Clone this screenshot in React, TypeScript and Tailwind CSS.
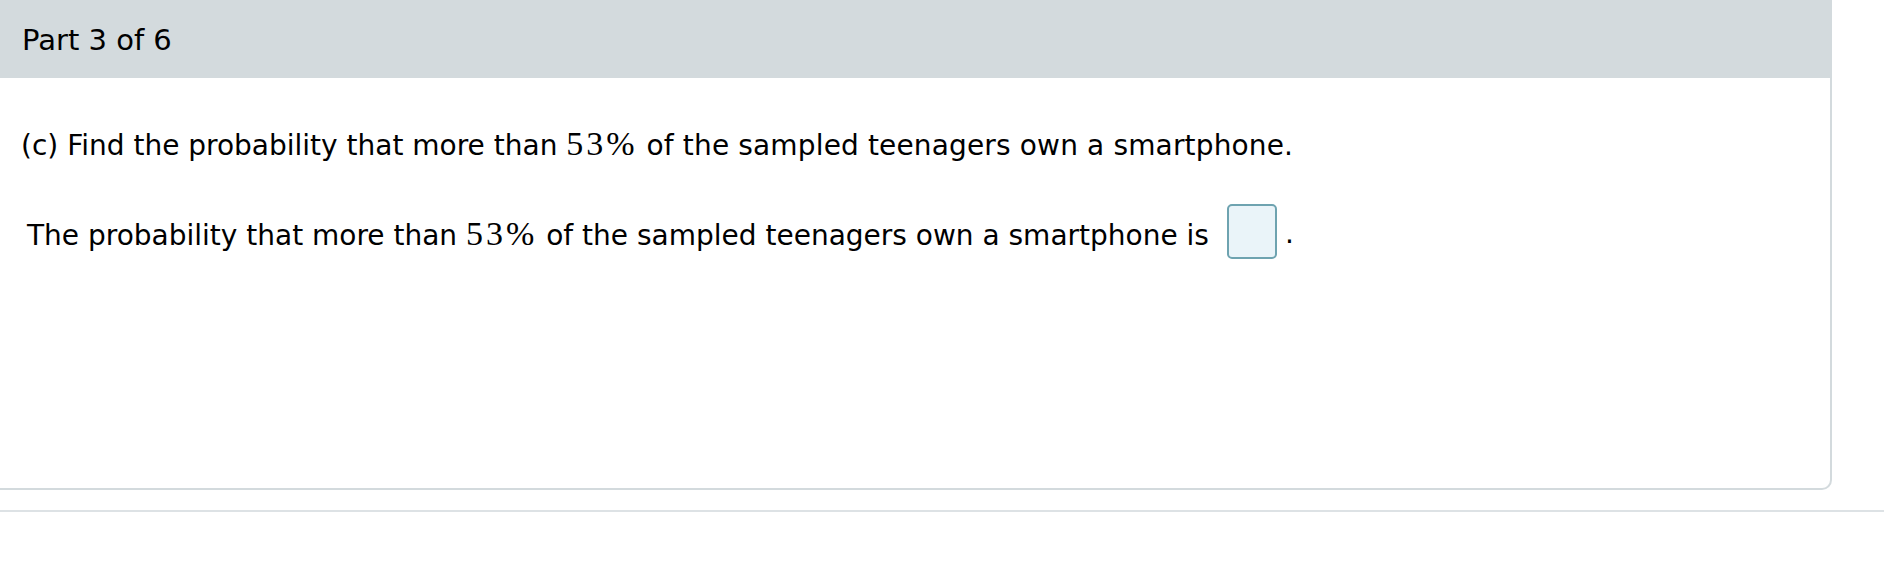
import React from "react";

export default function App() {
  const sans = { fontFamily: '"DejaVu Sans", Verdana, sans-serif' };
  const serif = { fontFamily: '"Liberation Serif", "Times New Roman", serif' };
  return (
    <div className="w-[1884px] h-[564px] bg-white text-black" style={sans}>
      <div className="w-[1832px] h-[490px] border-r-2 border-b-2 border-[#d3dadd] rounded-br-[10px] flex flex-col">
        <div className="h-[78px] bg-[#d3dadd] flex items-center pl-[22px] pt-[2px] text-[29px] leading-none">
          Part 3 of 6
        </div>
        <div className="pt-[49px] pl-[21px] text-[28px]">
          <div className="leading-[34px] whitespace-nowrap">
            (c) Find the probability that more than{" "}
            <span className="text-[34px] tracking-[3px]" style={serif}>
              53%
            </span>{" "}
            <span className="tracking-[0.15px]">of the sampled teenagers own a smartphone.</span>
          </div>
          <div className="mt-[41px] pl-[6px] flex items-start whitespace-nowrap">
            <span className="leading-[34px] mt-[13px]">
              The probability that more than{" "}
              <span className="text-[34px] tracking-[3px]" style={serif}>
                53%
              </span>{" "}
              of the sampled teenagers own a smartphone is
            </span>
            <div className="ml-[18px] w-[50px] h-[55px] border-2 border-[#6ea3b0] bg-[#eaf4f9] rounded-[5px]" />
            <span className="leading-[34px] mt-[13px] ml-[8px]">.</span>
          </div>
        </div>
      </div>
      <div className="mt-[20px] h-[2px] bg-[#dde2e5]" />
    </div>
  );
}
